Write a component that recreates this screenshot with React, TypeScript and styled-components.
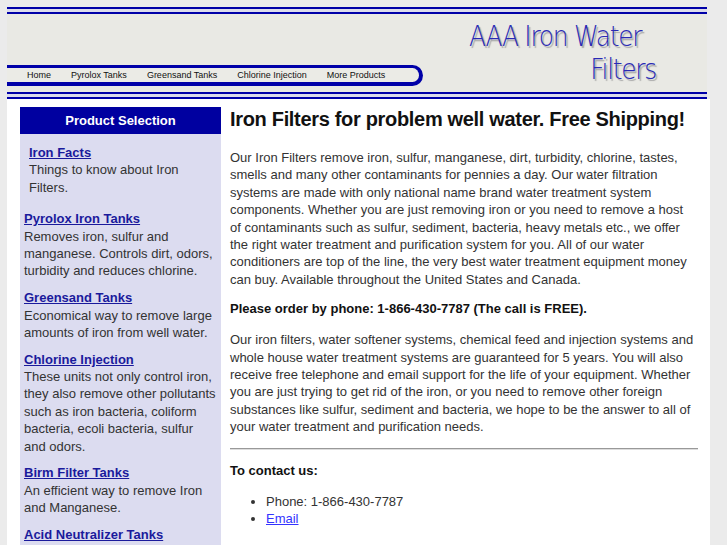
import React from 'react';
import styled, { createGlobalStyle } from 'styled-components';

const GlobalStyle = createGlobalStyle`
  html, body {
    margin: 0;
    padding: 0;
    background: #ebebeb;
  }
  body {
    font-family: 'Liberation Sans', Arial, sans-serif;
    font-size: 13px;
    color: #333;
  }
`;

const navItems = ['Home', 'Pyrolox Tanks', 'Greensand Tanks', 'Chlorine Injection', 'More Products'];

const products = [
  { title: 'Iron Facts', text: 'Things to know about Iron Filters.', first: true },
  { title: 'Pyrolox Iron Tanks', text: 'Removes iron, sulfur and manganese. Controls dirt, odors, turbidity and reduces chlorine.' },
  { title: 'Greensand Tanks', text: 'Economical way to remove large amounts of iron from well water.' },
  {
    title: 'Chlorine Injection',
    text: 'These units not only control iron, they also remove other pollutants such as iron bacteria, coliform bacteria, ecoli bacteria, sulfur and odors.',
  },
  { title: 'Birm Filter Tanks', text: 'An efficient way to remove Iron and Manganese.' },
  { title: 'Acid Neutralizer Tanks', text: 'Raises the pH of acidic water.' },
];

const App = () => {
  return (
    <Page>
      <GlobalStyle />
      <Header>
        <DoubleRule />
        <Banner>
          <NavBar>
            {navItems.map((item) => (
              <NavLink key={item} href="#">
                {item}
              </NavLink>
            ))}
          </NavBar>
          <Logo>
            <LogoLine>AAA Iron Water</LogoLine>
            <LogoLine $right>Filters</LogoLine>
          </Logo>
        </Banner>
        <DoubleRule />
      </Header>

      <Body>
        <Sidebar>
          <SideTitle>Product Selection</SideTitle>
          <SideList>
            {products.map((p) => (
              <SideItem key={p.title} $first={p.first}>
                <SideLink href="#">{p.title}</SideLink>
                <SideText>{p.text}</SideText>
              </SideItem>
            ))}
          </SideList>
        </Sidebar>

        <Main>
          <Title>Iron Filters for problem well water. Free Shipping!</Title>
          <Para>
            Our Iron Filters remove iron, sulfur, manganese, dirt, turbidity, chlorine, tastes, smells and many other
            contaminants for pennies a day. Our water filtration systems are made with only national name brand water
            treatment system components. Whether you are just removing iron or you need to remove a host of
            contaminants such as sulfur, sediment, bacteria, heavy metals etc., we offer the right water treatment and
            purification system for you. All of our water conditioners are top of the line, the very best water
            treatment equipment money can buy. Available throughout the United States and Canada.
          </Para>
          <Strong>Please order by phone: 1-866-430-7787 (The call is FREE).</Strong>
          <Para>
            Our iron filters, water softener systems, chemical feed and injection systems and whole house water
            treatment systems are guaranteed for 5 years. You will also receive free telephone and email support for
            the life of your equipment. Whether you are just trying to get rid of the iron, or you need to remove other
            foreign substances like sulfur, sediment and bacteria, we hope to be the answer to all of your water
            treatment and purification needs.
          </Para>
          <Divider />
          <Strong>To contact us:</Strong>
          <Contacts>
            <li>Phone: 1-866-430-7787</li>
            <li>
              <EmailLink href="#">Email</EmailLink>
            </li>
          </Contacts>
        </Main>
      </Body>
    </Page>
  );
};

export default App;

const Page = styled.div`
  padding: 7px 0 0 7px;
  width: 703px;
`;

const Header = styled.div`
  width: 700px;
  background: #e9e9e4;
  display: flex;
  flex-direction: column;
`;

const DoubleRule = styled.div`
  height: 7px;
  background: linear-gradient(
    to bottom,
    #0000a8 0,
    #0000a8 2px,
    #dcdcec 2px,
    #dcdcec 5px,
    #0000a8 5px,
    #0000a8 7px
  );
`;

const Banner = styled.div`
  height: 78px;
  display: flex;
  align-items: flex-start;
  justify-content: space-between;
  padding-right: 51px;
`;

const NavBar = styled.div`
  margin-top: 51px;
  width: 392px;
  height: 14px;
  padding-left: 20px;
  display: flex;
  align-items: center;
  gap: 20px;
  background: #ebebe6;
  border-top: 3px solid #0000a8;
  border-bottom: 4px solid #0000a8;
  border-right: 4px solid #0000a8;
  border-radius: 0 12px 12px 0;
`;

const NavLink = styled.a`
  font-family: 'Liberation Sans', Arial, sans-serif;
  font-size: 9px;
  color: #111;
  text-decoration: none;
  white-space: nowrap;
`;

const Logo = styled.div`
  margin-top: 6px;
  width: 187px;
  display: flex;
  flex-direction: column;
`;

const LogoLine = styled.div<{ $right?: boolean }>`
  font-family: 'DejaVu Sans', sans-serif;
  font-weight: 200;
  font-size: 29px;
  line-height: 33px;
  letter-spacing: -1.5px;
  color: #2a2ab4;
  text-shadow: 2px 2px 1px #a8a8a8;
  white-space: nowrap;
  text-align: ${(p) => (p.$right ? 'right' : 'left')};
  transform: scaleX(0.86);
  transform-origin: ${(p) => (p.$right ? 'right' : 'left')};
`;

const Body = styled.div`
  background: #fff;
  width: 703px;
  display: flex;
  align-items: flex-start;
  padding-top: 8px;
  min-height: 460px;
`;

const Sidebar = styled.div`
  margin-left: 13px;
  width: 201px;
  background: #dcdcf0;
  flex-shrink: 0;
`;

const SideTitle = styled.div`
  height: 27px;
  background: #0000a0;
  color: #fff;
  font-weight: bold;
  font-size: 13px;
  display: flex;
  align-items: center;
  justify-content: center;
`;

const SideList = styled.div`
  padding: 10px 4px 8px 4px;
`;

const SideItem = styled.div<{ $first?: boolean }>`
  line-height: 17.4px;
  padding-left: ${(p) => (p.$first ? '5px' : '0')};
  margin-bottom: ${(p) => (p.$first ? '14px' : '9.3px')};
`;

const SideLink = styled.a`
  display: block;
  color: #1a1a9c;
  font-weight: bold;
  text-decoration: underline;
`;

const SideText = styled.div`
  color: #333;
`;

const Main = styled.div`
  margin-left: 9px;
  width: 468px;
  line-height: 17.4px;
`;

const Title = styled.h1`
  margin: 0 0 18px;
  font-size: 20px;
  line-height: 24px;
  letter-spacing: -0.32px;
  color: #111;
  font-weight: bold;
  white-space: nowrap;
`;

const Para = styled.p`
  margin: 0 0 12px;
  width: 465px;
`;

const Strong = styled.p`
  margin: 0 0 13.5px;
  font-weight: bold;
  color: #111;
`;

const Divider = styled.hr`
  margin: 0 0 12px;
  border: none;
  border-top: 1px solid #999;
  border-bottom: 1px solid #ddd;
`;

const Contacts = styled.ul`
  margin: 0;
  padding-left: 36px;
  list-style: disc;
`;

const EmailLink = styled.a`
  color: #3333ff;
  text-decoration: underline;
`;
